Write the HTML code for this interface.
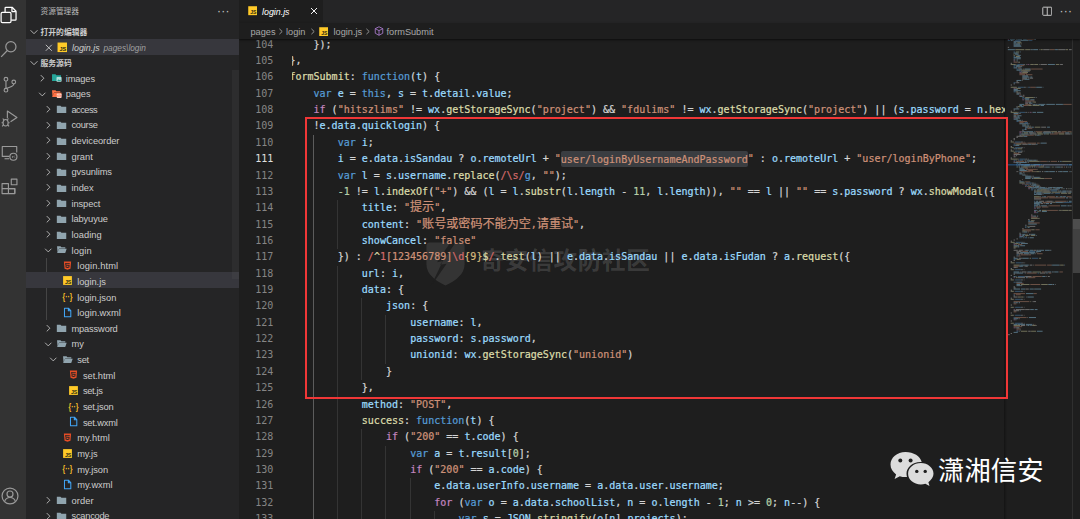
<!DOCTYPE html>
<html lang="zh-CN">
<head>
<meta charset="utf-8">
<title>login.js</title>
<style>
*{box-sizing:border-box;margin:0;padding:0}
html,body{width:1080px;height:519px;overflow:hidden;background:#1e1e1e}
body{position:relative;font-family:"Liberation Sans","Noto Sans CJK SC",sans-serif;color:#ccc;font-size:9.2px}
.abs{position:absolute}
#act{position:absolute;left:0;top:0;width:26px;height:519px;background:#333333}
#act svg{position:absolute;left:1px;width:17px;height:17px}
#side{position:absolute;left:26px;top:0;width:213px;height:519px;background:#252526;overflow:hidden}
#side .title{position:absolute;left:14.5px;top:5.5px;font-size:7.7px;color:#bbbbbb;line-height:11px;letter-spacing:0}
#side .dots{position:absolute;left:191px;top:4.6px;font-size:12px;color:#c5c5c5;letter-spacing:.3px;line-height:12px}
.sec{position:absolute;left:0;width:213px;height:15.6px;font-weight:bold;font-size:7.8px;color:#cccccc;line-height:15.6px}
.sec span{position:absolute;left:14.5px;top:0}
.sec svg{position:absolute;left:2.6px;top:2px;width:10px;height:10px}
.tr{position:absolute;left:0;width:213px;height:15.6px;line-height:15.2px;color:#cccccc;font-size:9.3px}
.tr.selrow{background:#37373d}
.tr span{position:absolute;top:0;height:15.6px}
.tr .chw svg{width:10.5px;height:10.5px;position:absolute;top:3.7px;left:0}
.tr .icw svg{width:11px;height:11px;position:absolute;top:3.0px;left:0}
.tr .tn{white-space:nowrap;top:2.4px}
#sidescroll{position:absolute;left:206px;top:70px;width:7px;height:209px;background:rgba(121,121,121,.10)}
#edit{position:absolute;left:239px;top:0;width:841px;height:519px;background:#1e1e1e;overflow:hidden}
#tabs{position:absolute;left:0;top:0;width:841px;height:23px;background:#252526}
#tab{position:absolute;left:0;top:0;width:84px;height:23px;background:#1e1e1e}
#tab .nm{position:absolute;left:23px;top:.8px;line-height:22px;font-style:italic;color:#ffffff;font-size:8.85px}
#bc{position:absolute;left:0;top:23px;width:841px;height:16px;background:#1e1e1e;color:#a9a9a9;font-size:9.2px;line-height:16px;white-space:nowrap;box-shadow:0 1px 2px rgba(0,0,0,.6);z-index:3}
#bc span{position:absolute;top:1px}
#code{z-index:1;position:absolute;left:53px;top:0;width:712.5px;height:519px;overflow:hidden;font-family:"Liberation Mono",monospace;font-size:10px;}
.cl{-webkit-text-stroke:.22px;position:absolute;white-space:pre;height:16.36px;line-height:16.36px;color:#d4d4d4;font-family:"DejaVu Sans Mono","Liberation Mono","Noto Sans CJK SC",monospace;font-size:10.033px}
.ln{position:absolute;left:0;width:34.4px;text-align:right;height:16.36px;line-height:16.36px;color:#858585;font-family:"DejaVu Sans Mono","Liberation Mono",monospace;font-size:10.033px}
.ln.cur{color:#e0e0e0}
.k{color:#569cd6}.c{color:#c586c0}.s{color:#ce9178}.v{color:#9cdcfe}.f{color:#dcdcaa}.n{color:#b5cea8}.r{color:#d16969}.p{color:#d4d4d4}.q{color:#d7ba7d}
.cj{line-height:0;font-size:12.08px;font-family:"Noto Sans CJK SC",sans-serif}
.sel{background:#3a3d41;padding:2.5px 0;border-radius:2px}
.ig{position:absolute;width:1px;background:#343434}.ig.act{background:#5c5c5c}
#red{position:absolute;left:305px;top:117.2px;width:702.6px;height:281.7px;border:2px solid #f03737;z-index:5}
#mmshadow{position:absolute;left:765px;top:39px;width:3px;height:480px;background:linear-gradient(to right,rgba(0,0,0,.35),rgba(0,0,0,0))}
#vscroll{position:absolute;left:833px;top:39px;width:8px;height:480px;border-left:1px solid #2f2f2f}
#vthumb{position:absolute;left:834px;top:218.500px;width:7px;height:54.500px;background:#414141}
#vthumb2{position:absolute;left:834px;top:218.500px;width:7px;height:10.500px;background:#4d4d4d}
#mmslider{display:none;position:absolute;left:769px;top:110px;width:57px;height:44px;background:rgba(121,121,121,.12)}
.mm{position:absolute;left:0;top:0}
#wm{position:absolute;left:190px;top:244.2px;width:240px;height:44px;z-index:0}
#wm .t{position:absolute;left:51.500px;top:.9px;font-size:23.5px;line-height:28px;font-weight:bold;letter-spacing:.8px;color:rgba(255,255,255,.14);white-space:nowrap;font-family:"Noto Sans CJK SC","Liberation Sans",sans-serif}
#wx{position:absolute;left:888px;top:449.2px;width:160px;height:42px;z-index:6}
#wx .t{color:#f4f4f4;position:absolute;left:50px;top:4.2px;font-size:26.4px;line-height:32px;color:#ffffff;white-space:nowrap;font-family:"Noto Sans CJK SC","Liberation Sans",sans-serif;font-weight:400}
</style>
</head>
<body>
<div id="act">
  <!-- files -->
  <svg style="top:6.4px;left:.3px;width:17.5px;height:17.5px" viewBox="0 0 24 24" fill="none" stroke="#ffffff" stroke-width="1.7" stroke-linejoin="round"><path d="M7 8.2V2.8a1 1 0 0 1 1-1h8.600l5.400 5.400v11.300a1 1 0 0 1-1 1h-5.600"/><path d="M16.400 2v5.600h5.400"/><rect x="1.500" y="8.800" width="13.600" height="14" rx="1.800"/></svg>
  <!-- search -->
  <svg style="top:40.2px;left:.4px;width:18px;height:18px" viewBox="0 0 24 24" fill="none" stroke="#9a9a9a" stroke-width="1.6"><circle cx="14.5" cy="9" r="6.8"/><path d="M9.8 14L1.5 22.5"/></svg>
  <!-- scm -->
  <svg style="top:75.5px" viewBox="0 0 24 24" fill="none" stroke="#9a9a9a" stroke-width="1.6"><circle cx="7" cy="4.5" r="2.6"/><circle cx="7" cy="20" r="2.6"/><circle cx="18" cy="8.5" r="2.6"/><path d="M7 7.2v10.2M18 11.2c0 4-6 4-10.6 6.6"/></svg>
  <!-- debug -->
  <svg style="top:109.5px" viewBox="0 0 24 24" fill="none" stroke="#9a9a9a" stroke-width="1.6" stroke-linejoin="round"><path d="M9 11.5V1.5L22.5 10.5 13.5 16.5"/><ellipse cx="6.5" cy="18" rx="3.6" ry="4.6"/><path d="M4 13.8L2.5 12M9 13.8L10.5 12M2.9 18H.8M12.2 18h-2.1M3.4 21.2L1.6 23M9.6 21.2l1.8 1.8"/></svg>
  <!-- remote -->
  <svg style="top:143.5px" viewBox="0 0 24 24" fill="none" stroke="#9a9a9a" stroke-width="1.6" stroke-linejoin="round"><path d="M12 17.5H1.8V3.5h20.4v8.5"/><path d="M5 20.8h6.5"/><circle cx="17.5" cy="18" r="5"/><path d="M15.6 17l1.4 1.4-1.4 1.4M19.6 16.4l-1.4 1.4 1.4 1.4" stroke-width="1"/></svg>
  <!-- extensions -->
  <svg style="top:177.5px" viewBox="0 0 24 24" fill="none" stroke="#9a9a9a" stroke-width="1.6" stroke-linejoin="round"><path d="M1.5 8h9v14h-9zM1.5 15h18v7h-18M10.5 15v7"/><path d="M10.5 15h9v7"/><rect x="14.5" y="1.5" width="8" height="8"/></svg>
  <!-- account -->
  <svg style="top:486.5px;left:.6px;width:18px;height:18px" viewBox="0 0 24 24" fill="none" stroke="#9a9a9a" stroke-width="1.6"><circle cx="12" cy="12" r="10.6"/><circle cx="12" cy="9.3" r="4"/><path d="M4.8 19.6c1-4 4-5.6 7.2-5.6s6.2 1.6 7.2 5.6"/></svg>
</div>

<div id="side">
  <div class="title">资源管理器</div>
  <div class="dots">···</div>
  <div class="sec" style="top:24.9px"><svg viewBox="0 0 16 16"><path d="M2.5 5.2L8 10.7l5.5-5.5" fill="none" stroke="#c5c5c5" stroke-width="1.4"/></svg><span>打开的编辑器</span></div>
  <div class="tr selrow" style="top:39.2px;height:15.4px">
    <span style="left:17.5px"><svg viewBox="0 0 16 16" style="position:absolute;top:3.9px;left:0;width:9.6px;height:9.6px"><path d="M3 3l10 10M13 3L3 13" stroke="#cccccc" stroke-width="1.5" fill="none"/></svg></span>
    <span style="left:30.7px"><svg viewBox="0 0 16 16" style="position:absolute;top:3.1px;left:0;width:10.6px;height:10.6px"><rect x="0.8" y="0.8" width="14.4" height="14.4" fill="#ffca28"/><text x="14" y="13.6" font-size="8.4" text-anchor="end" fill="#2b2810" font-family="Liberation Sans, sans-serif" font-weight="bold">JS</text></svg></span>
    <span class="tn" style="left:46px;font-style:italic;font-size:8.9px;top:1.9px">login.js</span>
    <span class="tn" style="left:77.5px;font-style:italic;font-size:8.3px;color:#a0a0a0;top:2.1px">pages\login</span>
  </div>
  <div class="sec" style="top:56.0px"><svg viewBox="0 0 16 16"><path d="M2.5 5.2L8 10.7l5.5-5.5" fill="none" stroke="#c5c5c5" stroke-width="1.4"/></svg><span>服务源码</span></div>
  <div style="position:absolute;left:20.3px;top:257.5px;width:1px;height:62.4px;background:#454545"></div>
<div class="tr" style="top:69.18px"><span class="chw" style="left:10.9px"><svg class="ch" viewBox="0 0 16 16"><path d="M5.7 3.2L10.5 8l-4.8 4.8" fill="none" stroke="#c5c5c5" stroke-width="1.3"/></svg></span><span class="icw" style="left:24.5px"><svg class="ic" viewBox="0 0 16 16"><path d="M1.5 3.2h5l1.4 1.6h6.6v8.4h-13z" fill="#26a69a"/><rect x="8" y="7.2" width="7.4" height="7" rx="1" fill="#b2dfdb"/><path d="M9 13l2-2.6 1.3 1.6.9-1 1.3 2z" fill="#26a69a"/></svg></span><span class="tn" style="left:39.8px;letter-spacing:-0.147px">images</span></div>
<div class="tr" style="top:84.82px"><span class="chw" style="left:10.9px"><svg class="ch" viewBox="0 0 16 16"><path d="M3.2 5.7L8 10.5l4.8-4.8" fill="none" stroke="#c5c5c5" stroke-width="1.3"/></svg></span><span class="icw" style="left:24.5px"><svg class="ic" viewBox="0 0 16 16"><path d="M1.5 3.2h5l1.4 1.6h5.6v1.7H4.6L2.2 12z" fill="#ff7043"/><path d="M4.4 6.9h11.2l-2.2 6.3H1.6z" fill="#ff7043"/><rect x="8.4" y="8" width="7" height="6.4" rx="1" fill="#ffccbc"/><text x="11.9" y="13.2" font-size="4.5" text-anchor="middle" fill="#ff7043" font-family="Liberation Sans, sans-serif" font-weight="bold">&lt;/&gt;</text></svg></span><span class="tn" style="left:39.8px;letter-spacing:-0.149px">pages</span></div>
<div class="tr" style="top:100.46px"><span class="chw" style="left:16.6px"><svg class="ch" viewBox="0 0 16 16"><path d="M5.7 3.2L10.5 8l-4.8 4.8" fill="none" stroke="#c5c5c5" stroke-width="1.3"/></svg></span><span class="icw" style="left:30.2px"><svg class="ic" viewBox="0 0 16 16"><path d="M1.200 4h5.300l1.400 1.600h7v9h-13.700z" fill="#90a4ae"/></svg></span><span class="tn" style="left:45.5px;letter-spacing:-0.556px">access</span></div>
<div class="tr" style="top:116.10px"><span class="chw" style="left:16.6px"><svg class="ch" viewBox="0 0 16 16"><path d="M5.7 3.2L10.5 8l-4.8 4.8" fill="none" stroke="#c5c5c5" stroke-width="1.3"/></svg></span><span class="icw" style="left:30.2px"><svg class="ic" viewBox="0 0 16 16"><path d="M1.200 4h5.300l1.400 1.600h7v9h-13.700z" fill="#90a4ae"/></svg></span><span class="tn" style="left:45.5px;letter-spacing:-0.301px">course</span></div>
<div class="tr" style="top:131.74px"><span class="chw" style="left:16.6px"><svg class="ch" viewBox="0 0 16 16"><path d="M5.7 3.2L10.5 8l-4.8 4.8" fill="none" stroke="#c5c5c5" stroke-width="1.3"/></svg></span><span class="icw" style="left:30.2px"><svg class="ic" viewBox="0 0 16 16"><path d="M1.200 4h5.300l1.400 1.600h7v9h-13.700z" fill="#90a4ae"/></svg></span><span class="tn" style="left:45.5px;letter-spacing:-0.062px">deviceorder</span></div>
<div class="tr" style="top:147.38px"><span class="chw" style="left:16.6px"><svg class="ch" viewBox="0 0 16 16"><path d="M5.7 3.2L10.5 8l-4.8 4.8" fill="none" stroke="#c5c5c5" stroke-width="1.3"/></svg></span><span class="icw" style="left:30.2px"><svg class="ic" viewBox="0 0 16 16"><path d="M1.200 4h5.300l1.400 1.600h7v9h-13.700z" fill="#90a4ae"/></svg></span><span class="tn" style="left:45.5px;letter-spacing:0.019px">grant</span></div>
<div class="tr" style="top:163.01px"><span class="chw" style="left:16.6px"><svg class="ch" viewBox="0 0 16 16"><path d="M5.7 3.2L10.5 8l-4.8 4.8" fill="none" stroke="#c5c5c5" stroke-width="1.3"/></svg></span><span class="icw" style="left:30.2px"><svg class="ic" viewBox="0 0 16 16"><path d="M1.200 4h5.300l1.400 1.600h7v9h-13.700z" fill="#90a4ae"/></svg></span><span class="tn" style="left:45.5px;letter-spacing:-0.105px">gvsunlims</span></div>
<div class="tr" style="top:178.65px"><span class="chw" style="left:16.6px"><svg class="ch" viewBox="0 0 16 16"><path d="M5.7 3.2L10.5 8l-4.8 4.8" fill="none" stroke="#c5c5c5" stroke-width="1.3"/></svg></span><span class="icw" style="left:30.2px"><svg class="ic" viewBox="0 0 16 16"><path d="M1.200 4h5.300l1.400 1.600h7v9h-13.700z" fill="#90a4ae"/></svg></span><span class="tn" style="left:45.5px;letter-spacing:-0.027px">index</span></div>
<div class="tr" style="top:194.29px"><span class="chw" style="left:16.6px"><svg class="ch" viewBox="0 0 16 16"><path d="M5.7 3.2L10.5 8l-4.8 4.8" fill="none" stroke="#c5c5c5" stroke-width="1.3"/></svg></span><span class="icw" style="left:30.2px"><svg class="ic" viewBox="0 0 16 16"><path d="M1.200 4h5.300l1.400 1.600h7v9h-13.700z" fill="#90a4ae"/></svg></span><span class="tn" style="left:45.5px;letter-spacing:-0.096px">inspect</span></div>
<div class="tr" style="top:209.93px"><span class="chw" style="left:16.6px"><svg class="ch" viewBox="0 0 16 16"><path d="M5.7 3.2L10.5 8l-4.8 4.8" fill="none" stroke="#c5c5c5" stroke-width="1.3"/></svg></span><span class="icw" style="left:30.2px"><svg class="ic" viewBox="0 0 16 16"><path d="M1.200 4h5.300l1.400 1.600h7v9h-13.700z" fill="#90a4ae"/></svg></span><span class="tn" style="left:45.5px;letter-spacing:-0.115px">labyuyue</span></div>
<div class="tr" style="top:225.57px"><span class="chw" style="left:16.6px"><svg class="ch" viewBox="0 0 16 16"><path d="M5.7 3.2L10.5 8l-4.8 4.8" fill="none" stroke="#c5c5c5" stroke-width="1.3"/></svg></span><span class="icw" style="left:30.2px"><svg class="ic" viewBox="0 0 16 16"><path d="M1.200 4h5.300l1.400 1.600h7v9h-13.700z" fill="#90a4ae"/></svg></span><span class="tn" style="left:45.5px;letter-spacing:0.045px">loading</span></div>
<div class="tr" style="top:241.21px"><span class="chw" style="left:16.6px"><svg class="ch" viewBox="0 0 16 16"><path d="M3.2 5.7L8 10.5l4.8-4.8" fill="none" stroke="#c5c5c5" stroke-width="1.3"/></svg></span><span class="icw" style="left:30.2px"><svg class="ic" viewBox="0 0 16 16"><path d="M1.5 3.2h5l1.4 1.6h5.6v1.7H4.6L2.2 12z" fill="#90a4ae"/><path d="M4.4 6.9h11.2l-2.2 6.3H1.6z" fill="#90a4ae"/></svg></span><span class="tn" style="left:45.5px;letter-spacing:0.129px">login</span></div>
<div class="tr" style="top:256.85px"><span class="icw" style="left:35.9px"><svg class="ic" viewBox="0 0 24 24"><path fill-rule="evenodd" d="M12 17.560l4.070-1.130.550-6.100H9.380L9.200 8.300h7.600l.200-1.990H7l.560 6.010h6.890l-.230 2.580-2.220.600-2.220-.600-.140-1.660h-2l.290 3.190L12 17.560M4.070 3h15.860L18.500 19.200 12 21l-6.500-1.800L4.070 3z" fill="#e44d26"/></svg></span><span class="tn" style="left:51.2px;letter-spacing:0.130px">login.html</span></div>
<div class="tr selrow" style="top:272.49px"><span class="icw" style="left:35.9px"><svg class="ic" viewBox="0 0 16 16"><rect x="1.6" y="1.6" width="12.8" height="12.8" fill="#ffca28"/><text x="13.6" y="13.4" font-size="7.6" text-anchor="end" fill="#2b2810" font-family="Liberation Sans, sans-serif" font-weight="bold">JS</text></svg></span><span class="tn" style="left:51.2px;letter-spacing:-0.044px">login.js</span></div>
<div class="tr" style="top:288.13px"><span class="icw" style="left:35.9px"><svg class="ic" viewBox="0 0 16 16"><text x="8" y="12.6" font-size="13.5" text-anchor="middle" fill="#f9c02a" font-family="Liberation Sans, sans-serif" font-weight="bold" textLength="14.5" lengthAdjust="spacingAndGlyphs">{··}</text></svg></span><span class="tn" style="left:51.2px;letter-spacing:-0.018px">login.json</span></div>
<div class="tr" style="top:303.77px"><span class="icw" style="left:35.9px"><svg class="ic" viewBox="0 0 16 16"><path d="M3.6 1.8h5.8l3.4 3.4v9H3.6z M9.2 2v3.6h3.4" fill="none" stroke="#42a5f5" stroke-width="1.5" stroke-linejoin="round"/></svg></span><span class="tn" style="left:51.2px;letter-spacing:0.019px">login.wxml</span></div>
<div class="tr" style="top:319.40px"><span class="chw" style="left:16.6px"><svg class="ch" viewBox="0 0 16 16"><path d="M5.7 3.2L10.5 8l-4.8 4.8" fill="none" stroke="#c5c5c5" stroke-width="1.3"/></svg></span><span class="icw" style="left:30.2px"><svg class="ic" viewBox="0 0 16 16"><path d="M1.200 4h5.300l1.400 1.600h7v9h-13.700z" fill="#90a4ae"/></svg></span><span class="tn" style="left:45.5px;letter-spacing:-0.161px">mpassword</span></div>
<div class="tr" style="top:335.04px"><span class="chw" style="left:16.6px"><svg class="ch" viewBox="0 0 16 16"><path d="M3.2 5.7L8 10.5l4.8-4.8" fill="none" stroke="#c5c5c5" stroke-width="1.3"/></svg></span><span class="icw" style="left:30.2px"><svg class="ic" viewBox="0 0 16 16"><path d="M1.5 3.2h5l1.4 1.6h5.6v1.7H4.6L2.2 12z" fill="#90a4ae"/><path d="M4.4 6.9h11.2l-2.2 6.3H1.6z" fill="#90a4ae"/></svg></span><span class="tn" style="left:45.5px;letter-spacing:-0.053px">my</span></div>
<div class="tr" style="top:350.68px"><span class="chw" style="left:22.3px"><svg class="ch" viewBox="0 0 16 16"><path d="M3.2 5.7L8 10.5l4.8-4.8" fill="none" stroke="#c5c5c5" stroke-width="1.3"/></svg></span><span class="icw" style="left:35.9px"><svg class="ic" viewBox="0 0 16 16"><path d="M1.5 3.2h5l1.4 1.6h5.6v1.7H4.6L2.2 12z" fill="#90a4ae"/><path d="M4.4 6.9h11.2l-2.2 6.3H1.6z" fill="#90a4ae"/></svg></span><span class="tn" style="left:51.2px;letter-spacing:-0.202px">set</span></div>
<div class="tr" style="top:366.32px"><span class="icw" style="left:41.6px"><svg class="ic" viewBox="0 0 24 24"><path fill-rule="evenodd" d="M12 17.560l4.070-1.130.550-6.100H9.380L9.200 8.300h7.600l.200-1.990H7l.560 6.010h6.890l-.230 2.580-2.220.600-2.220-.600-.140-1.660h-2l.290 3.190L12 17.560M4.070 3h15.860L18.500 19.200 12 21l-6.500-1.800L4.070 3z" fill="#e44d26"/></svg></span><span class="tn" style="left:56.9px;letter-spacing:-0.033px">set.html</span></div>
<div class="tr" style="top:381.96px"><span class="icw" style="left:41.6px"><svg class="ic" viewBox="0 0 16 16"><rect x="1.6" y="1.6" width="12.8" height="12.8" fill="#ffca28"/><text x="13.6" y="13.4" font-size="7.6" text-anchor="end" fill="#2b2810" font-family="Liberation Sans, sans-serif" font-weight="bold">JS</text></svg></span><span class="tn" style="left:56.9px;letter-spacing:-0.317px">set.js</span></div>
<div class="tr" style="top:397.60px"><span class="icw" style="left:41.6px"><svg class="ic" viewBox="0 0 16 16"><text x="8" y="12.6" font-size="13.5" text-anchor="middle" fill="#f9c02a" font-family="Liberation Sans, sans-serif" font-weight="bold" textLength="14.5" lengthAdjust="spacingAndGlyphs">{··}</text></svg></span><span class="tn" style="left:56.9px;letter-spacing:-0.193px">set.json</span></div>
<div class="tr" style="top:413.24px"><span class="icw" style="left:41.6px"><svg class="ic" viewBox="0 0 16 16"><path d="M3.6 1.8h5.8l3.4 3.4v9H3.6z M9.2 2v3.6h3.4" fill="none" stroke="#42a5f5" stroke-width="1.5" stroke-linejoin="round"/></svg></span><span class="tn" style="left:56.9px;letter-spacing:-0.171px">set.wxml</span></div>
<div class="tr" style="top:428.88px"><span class="icw" style="left:35.9px"><svg class="ic" viewBox="0 0 24 24"><path fill-rule="evenodd" d="M12 17.560l4.070-1.130.550-6.100H9.380L9.200 8.300h7.600l.200-1.990H7l.560 6.010h6.890l-.230 2.580-2.220.600-2.220-.600-.140-1.660h-2l.290 3.190L12 17.560M4.070 3h15.860L18.500 19.200 12 21l-6.500-1.800L4.070 3z" fill="#e44d26"/></svg></span><span class="tn" style="left:51.2px;letter-spacing:0.134px">my.html</span></div>
<div class="tr" style="top:444.52px"><span class="icw" style="left:35.9px"><svg class="ic" viewBox="0 0 16 16"><rect x="1.6" y="1.6" width="12.8" height="12.8" fill="#ffca28"/><text x="13.6" y="13.4" font-size="7.6" text-anchor="end" fill="#2b2810" font-family="Liberation Sans, sans-serif" font-weight="bold">JS</text></svg></span><span class="tn" style="left:51.2px;letter-spacing:-0.140px">my.js</span></div>
<div class="tr" style="top:460.16px"><span class="icw" style="left:35.9px"><svg class="ic" viewBox="0 0 16 16"><text x="8" y="12.6" font-size="13.5" text-anchor="middle" fill="#f9c02a" font-family="Liberation Sans, sans-serif" font-weight="bold" textLength="14.5" lengthAdjust="spacingAndGlyphs">{··}</text></svg></span><span class="tn" style="left:51.2px;letter-spacing:-0.078px">my.json</span></div>
<div class="tr" style="top:475.79px"><span class="icw" style="left:35.9px"><svg class="ic" viewBox="0 0 16 16"><path d="M3.6 1.8h5.8l3.4 3.4v9H3.6z M9.2 2v3.6h3.4" fill="none" stroke="#42a5f5" stroke-width="1.5" stroke-linejoin="round"/></svg></span><span class="tn" style="left:51.2px;letter-spacing:-0.024px">my.wxml</span></div>
<div class="tr" style="top:491.43px"><span class="chw" style="left:16.6px"><svg class="ch" viewBox="0 0 16 16"><path d="M5.7 3.2L10.5 8l-4.8 4.8" fill="none" stroke="#c5c5c5" stroke-width="1.3"/></svg></span><span class="icw" style="left:30.2px"><svg class="ic" viewBox="0 0 16 16"><path d="M1.200 4h5.300l1.400 1.600h7v9h-13.700z" fill="#90a4ae"/></svg></span><span class="tn" style="left:45.5px;letter-spacing:0.076px">order</span></div>
<div class="tr" style="top:507.07px"><span class="chw" style="left:16.6px"><svg class="ch" viewBox="0 0 16 16"><path d="M5.7 3.2L10.5 8l-4.8 4.8" fill="none" stroke="#c5c5c5" stroke-width="1.3"/></svg></span><span class="icw" style="left:30.2px"><svg class="ic" viewBox="0 0 16 16"><path d="M1.200 4h5.300l1.400 1.600h7v9h-13.700z" fill="#90a4ae"/></svg></span><span class="tn" style="left:45.5px;letter-spacing:-0.252px">scancode</span></div>
  <div id="sidescroll"></div>
</div>

<div id="edit">
  <div id="tabs">
    <div id="tab">
      <svg viewBox="0 0 16 16" style="position:absolute;left:8.8px;top:6.3px;width:9.4px;height:9.4px"><rect x="0.4" y="0.4" width="15.2" height="15.2" fill="#ffca28"/><text x="14.4" y="14" font-size="8.6" text-anchor="end" fill="#2b2810" font-family="Liberation Sans, sans-serif" font-weight="bold">JS</text></svg>
      <span class="nm">login.js</span>
      <svg viewBox="0 0 16 16" style="position:absolute;left:70.5px;top:7px;width:8px;height:8px"><path d="M2 2l12 12M14 2L2 14" stroke="#ffffff" stroke-width="1.9" fill="none"/></svg>
    </div>
    <!-- split + more -->
    <svg viewBox="0 0 16 16" style="position:absolute;left:802.5px;top:6px;width:10.5px;height:10.5px"><rect x="1.2" y="1.8" width="13.6" height="12.4" rx="1" fill="none" stroke="#c5c5c5" stroke-width="1.5"/><path d="M8 2v12" stroke="#c5c5c5" stroke-width="1.5"/></svg>
    <div style="position:absolute;left:820.5px;top:4.8px;font-size:12px;line-height:12px;color:#c5c5c5;letter-spacing:.3px">···</div>
  </div>
  <div id="bc">
    <span style="left:11.5px">pages</span>
    <svg viewBox="0 0 8 10" style="position:absolute;left:38.8px;top:4.6px;width:5.6px;height:7px" fill="none" stroke="#a9a9a9" stroke-width="1.2"><path d="M2 1.2L6 5 2 8.800"/></svg>
    <span style="left:47px">login</span>
    <svg viewBox="0 0 8 10" style="position:absolute;left:71.3px;top:4.6px;width:5.6px;height:7px" fill="none" stroke="#a9a9a9" stroke-width="1.2"><path d="M2 1.2L6 5 2 8.800"/></svg>
    <svg viewBox="0 0 16 16" style="position:absolute;left:80px;top:3.6px;width:9.4px;height:9.4px"><rect x="0.4" y="0.4" width="15.2" height="15.2" fill="#ffca28"/><text x="14.4" y="14" font-size="8.6" text-anchor="end" fill="#2b2810" font-family="Liberation Sans, sans-serif" font-weight="bold">JS</text></svg>
    <span style="left:94.5px">login.js</span>
    <svg viewBox="0 0 8 10" style="position:absolute;left:126.3px;top:4.6px;width:5.6px;height:7px" fill="none" stroke="#a9a9a9" stroke-width="1.2"><path d="M2 1.2L6 5 2 8.800"/></svg>
    <svg viewBox="0 0 16 16" style="position:absolute;left:135px;top:3.2px;width:10px;height:10px" fill="none" stroke="#b180d7" stroke-width="1.3" stroke-linejoin="round"><path d="M8 1.2l6 3v7.4l-6 3.2-6-3.2V4.2z"/><path d="M2 4.2l6 3.2 6-3.2M8 7.4v7.4"/></svg>
    <span style="left:147.5px">formSubmit</span>
  </div>
<div id="wm">
  <svg viewBox="0 0 40 43" style="position:absolute;left:-5.200px;top:-3.600px;width:43px;height:45.500px"><path d="M2 4.500C2 2.800 3.200 1.500 5 1.500H35C36.800 1.500 38 2.800 38 4.500V22C38 31 30 37.500 20 42 10 37.500 2 31 2 22Z" fill="#ffffff" fill-opacity=".1"/><path d="M30.500 0L15 22.500 21 21.500 5.500 44 17.500 19 12 20 25.500 0Z" fill="#1e1e1e" fill-opacity=".92"/></svg>
  <div class="t">奇安信攻防社区</div>
</div>
  <div id="lns" style="position:absolute;left:0;top:0;width:50px;height:519px">
<div class="ln" style="top:36.62px">104</div>
<div class="ln" style="top:52.98px">105</div>
<div class="ln" style="top:69.34px">106</div>
<div class="ln" style="top:85.70px">107</div>
<div class="ln" style="top:102.06px">108</div>
<div class="ln" style="top:118.42px">109</div>
<div class="ln" style="top:134.78px">110</div>
<div class="ln cur" style="top:151.14px">111</div>
<div class="ln" style="top:167.50px">112</div>
<div class="ln" style="top:183.86px">113</div>
<div class="ln" style="top:200.22px">114</div>
<div class="ln" style="top:216.58px">115</div>
<div class="ln" style="top:232.94px">116</div>
<div class="ln" style="top:249.30px">117</div>
<div class="ln" style="top:265.66px">118</div>
<div class="ln" style="top:282.02px">119</div>
<div class="ln" style="top:298.38px">120</div>
<div class="ln" style="top:314.74px">121</div>
<div class="ln" style="top:331.10px">122</div>
<div class="ln" style="top:347.46px">123</div>
<div class="ln" style="top:363.82px">124</div>
<div class="ln" style="top:380.18px">125</div>
<div class="ln" style="top:396.54px">126</div>
<div class="ln" style="top:412.90px">127</div>
<div class="ln" style="top:429.26px">128</div>
<div class="ln" style="top:445.62px">129</div>
<div class="ln" style="top:461.98px">130</div>
<div class="ln" style="top:478.34px">131</div>
<div class="ln" style="top:494.70px">132</div>
<div class="ln" style="top:511.06px">133</div>
  </div>
  <div id="code">
<div class="ig act" style="left:20.9px;top:134.78px;height:392.64px"></div>
<div class="ig" style="left:45.1px;top:200.22px;height:49.08px"></div>
<div class="ig" style="left:45.1px;top:265.66px;height:261.76px"></div>
<div class="ig" style="left:69.2px;top:298.38px;height:81.80px"></div>
<div class="ig" style="left:93.4px;top:314.74px;height:49.08px"></div>
<div class="ig" style="left:69.2px;top:429.26px;height:98.16px"></div>
<div class="ig" style="left:93.4px;top:445.62px;height:81.80px"></div>
<div class="ig" style="left:117.6px;top:478.34px;height:49.08px"></div>
<div class="ig" style="left:141.7px;top:511.06px;height:16.36px"></div>
<div class="cl" style="top:36.62px;left:21.5px"><span class="p">});</span></div>
<div class="cl" style="top:52.98px;left:-2.6px"><span class="p">},</span></div>
<div class="cl" style="top:69.34px;left:-2.6px"><span class="f">formSubmit</span><span class="p">: </span><span class="k">function</span><span class="p">(</span><span class="v">t</span><span class="p">) {</span></div>
<div class="cl" style="top:85.70px;left:21.5px"><span class="k">var</span><span class="p"> </span><span class="v">e</span><span class="p"> = </span><span class="k">this</span><span class="p">, </span><span class="v">s</span><span class="p"> = </span><span class="v">t</span><span class="p">.</span><span class="v">detail</span><span class="p">.</span><span class="v">value</span><span class="p">;</span></div>
<div class="cl" style="top:102.06px;left:21.5px"><span class="c">if</span><span class="p"> (</span><span class="s">"hitszlims"</span><span class="p"> != </span><span class="v">wx</span><span class="p">.</span><span class="f">getStorageSync</span><span class="p">(</span><span class="s">"project"</span><span class="p">) &amp;&amp; </span><span class="s">"fdulims"</span><span class="p"> != </span><span class="v">wx</span><span class="p">.</span><span class="f">getStorageSync</span><span class="p">(</span><span class="s">"project"</span><span class="p">) || (</span><span class="v">s</span><span class="p">.</span><span class="v">password</span><span class="p"> = </span><span class="v">n</span><span class="p">.</span><span class="f">hexMD5</span><span class="p">(</span><span class="v">s</span><span class="p">.</span><span class="v">password</span><span class="p">)),</span></div>
<div class="cl" style="top:118.42px;left:21.5px"><span class="p">!</span><span class="v">e</span><span class="p">.</span><span class="v">data</span><span class="p">.</span><span class="v">quicklogin</span><span class="p">) {</span></div>
<div class="cl" style="top:134.78px;left:45.7px"><span class="k">var</span><span class="p"> </span><span class="v">i</span><span class="p">;</span></div>
<div class="cl" style="top:151.14px;left:45.7px"><span class="v">i</span><span class="p"> = </span><span class="v">e</span><span class="p">.</span><span class="v">data</span><span class="p">.</span><span class="v">isSandau</span><span class="p"> ? </span><span class="v">o</span><span class="p">.</span><span class="v">remoteUrl</span><span class="p"> + </span><span class="s">"</span><span class="s sel">user/loginByUsernameAndPassword</span><span class="s">"</span><span class="p"> : </span><span class="v">o</span><span class="p">.</span><span class="v">remoteUrl</span><span class="p"> + </span><span class="s">"user/loginByPhone"</span><span class="p">;</span></div>
<div class="cl" style="top:167.50px;left:45.7px"><span class="k">var</span><span class="p"> </span><span class="v">l</span><span class="p"> = </span><span class="v">s</span><span class="p">.</span><span class="v">username</span><span class="p">.</span><span class="f">replace</span><span class="p">(</span><span class="r">/\s/</span><span class="k">g</span><span class="p">, </span><span class="s">""</span><span class="p">);</span></div>
<div class="cl" style="top:183.86px;left:45.7px"><span class="n">-1</span><span class="p"> != </span><span class="v">l</span><span class="p">.</span><span class="f">indexOf</span><span class="p">(</span><span class="s">"+"</span><span class="p">) &amp;&amp; (</span><span class="v">l</span><span class="p"> = </span><span class="v">l</span><span class="p">.</span><span class="f">substr</span><span class="p">(</span><span class="v">l</span><span class="p">.</span><span class="v">length</span><span class="p"> - </span><span class="n">11</span><span class="p">, </span><span class="v">l</span><span class="p">.</span><span class="v">length</span><span class="p">)), </span><span class="s">""</span><span class="p"> == </span><span class="v">l</span><span class="p"> || </span><span class="s">""</span><span class="p"> == </span><span class="v">s</span><span class="p">.</span><span class="v">password</span><span class="p"> ? </span><span class="v">wx</span><span class="p">.</span><span class="f">showModal</span><span class="p">({</span></div>
<div class="cl" style="top:200.22px;left:69.8px"><span class="v">title</span><span class="p">: </span><span class="s">"<span class="cj">提示</span>"</span><span class="p">,</span></div>
<div class="cl" style="top:216.58px;left:69.8px"><span class="v">content</span><span class="p">: </span><span class="s">"<span class="cj">账号或密码不能为空</span>,<span class="cj">请重试</span>"</span><span class="p">,</span></div>
<div class="cl" style="top:232.94px;left:69.8px"><span class="v">showCancel</span><span class="p">: </span><span class="s">"false"</span></div>
<div class="cl" style="top:249.30px;left:45.7px"><span class="p">}) : </span><span class="r">/</span><span class="f">^</span><span class="r">1</span><span class="s">[123456789]</span><span class="r">\d</span><span class="q">{9}</span><span class="f">$</span><span class="r">/</span><span class="p">.</span><span class="f">test</span><span class="p">(</span><span class="v">l</span><span class="p">) || </span><span class="v">e</span><span class="p">.</span><span class="v">data</span><span class="p">.</span><span class="v">isSandau</span><span class="p"> || </span><span class="v">e</span><span class="p">.</span><span class="v">data</span><span class="p">.</span><span class="v">isFudan</span><span class="p"> ? </span><span class="v">a</span><span class="p">.</span><span class="f">request</span><span class="p">({</span></div>
<div class="cl" style="top:265.66px;left:69.8px"><span class="v">url</span><span class="p">: </span><span class="v">i</span><span class="p">,</span></div>
<div class="cl" style="top:282.02px;left:69.8px"><span class="v">data</span><span class="p">: {</span></div>
<div class="cl" style="top:298.38px;left:94.0px"><span class="v">json</span><span class="p">: {</span></div>
<div class="cl" style="top:314.74px;left:118.2px"><span class="v">username</span><span class="p">: </span><span class="v">l</span><span class="p">,</span></div>
<div class="cl" style="top:331.10px;left:118.2px"><span class="v">password</span><span class="p">: </span><span class="v">s</span><span class="p">.</span><span class="v">password</span><span class="p">,</span></div>
<div class="cl" style="top:347.46px;left:118.2px"><span class="v">unionid</span><span class="p">: </span><span class="v">wx</span><span class="p">.</span><span class="f">getStorageSync</span><span class="p">(</span><span class="s">"unionid"</span><span class="p">)</span></div>
<div class="cl" style="top:363.82px;left:94.0px"><span class="p">}</span></div>
<div class="cl" style="top:380.18px;left:69.8px"><span class="p">},</span></div>
<div class="cl" style="top:396.54px;left:69.8px"><span class="v">method</span><span class="p">: </span><span class="s">"POST"</span><span class="p">,</span></div>
<div class="cl" style="top:412.90px;left:69.8px"><span class="f">success</span><span class="p">: </span><span class="k">function</span><span class="p">(</span><span class="v">t</span><span class="p">) {</span></div>
<div class="cl" style="top:429.26px;left:94.0px"><span class="c">if</span><span class="p"> (</span><span class="s">"200"</span><span class="p"> == </span><span class="v">t</span><span class="p">.</span><span class="v">code</span><span class="p">) {</span></div>
<div class="cl" style="top:445.62px;left:118.2px"><span class="k">var</span><span class="p"> </span><span class="v">a</span><span class="p"> = </span><span class="v">t</span><span class="p">.</span><span class="v">result</span><span class="p">[</span><span class="n">0</span><span class="p">];</span></div>
<div class="cl" style="top:461.98px;left:118.2px"><span class="c">if</span><span class="p"> (</span><span class="s">"200"</span><span class="p"> == </span><span class="v">a</span><span class="p">.</span><span class="v">code</span><span class="p">) {</span></div>
<div class="cl" style="top:478.34px;left:142.3px"><span class="v">e</span><span class="p">.</span><span class="v">data</span><span class="p">.</span><span class="v">userInfo</span><span class="p">.</span><span class="v">username</span><span class="p"> = </span><span class="v">a</span><span class="p">.</span><span class="v">data</span><span class="p">.</span><span class="v">user</span><span class="p">.</span><span class="v">username</span><span class="p">;</span></div>
<div class="cl" style="top:494.70px;left:142.3px"><span class="c">for</span><span class="p"> (</span><span class="k">var</span><span class="p"> </span><span class="v">o</span><span class="p"> = </span><span class="v">a</span><span class="p">.</span><span class="v">data</span><span class="p">.</span><span class="v">schoolList</span><span class="p">, </span><span class="v">n</span><span class="p"> = </span><span class="v">o</span><span class="p">.</span><span class="v">length</span><span class="p"> - </span><span class="n">1</span><span class="p">; </span><span class="v">n</span><span class="p"> &gt;= </span><span class="n">0</span><span class="p">; </span><span class="v">n</span><span class="p">--) {</span></div>
<div class="cl" style="top:511.06px;left:166.5px"><span class="k">var</span><span class="p"> </span><span class="v">s</span><span class="p"> = </span><span class="v">JSON</span><span class="p">.</span><span class="f">stringify</span><span class="p">(</span><span class="v">o</span><span class="p">[</span><span class="v">n</span><span class="p">].</span><span class="v">projects</span><span class="p">);</span></div>
  </div>
  <div id="mmshadow"></div>
  <div id="mmslider"></div>
  <div id="vscroll"></div>
  <div id="vthumb"></div>
  <div id="vthumb2"></div>
</div>
<svg class="mm" width="1080" height="519" viewBox="0 0 1080 519" fill="none" stroke-width="1.0" stroke-opacity=".43"><rect x="1007.8" y="164.20" width="64.2" height="1.2" fill="#264f78" stroke="none"/><path d="M1007.8 39.40h1.3M1013.6 61.06h1.3M1027.4 64.48h2.0M1019.4 72.46h2.0M1013.6 88.42h2.0M1019.4 95.26h1.3M1022.3 99.82h2.0M1025.2 102.10h2.0M1029.6 112.36h2.0M1013.6 118.06h1.3M1019.4 131.74h2.0M1019.4 132.88h2.0M1013.6 155.68h1.3M1013.6 161.38h1.3M1022.3 184.18h1.3M1025.2 186.46h1.3M1028.2 188.74h2.0M1034.0 208.12h2.0M1034.0 211.54h2.0M1034.0 212.68h2.0M1031.1 216.10h1.3M1019.4 235.48h2.0M1013.6 244.60h2.0M1013.6 277.66h1.3M1013.6 309.58h1.3M1013.6 319.84h2.0M1013.6 327.82h2.0M1016.5 330.10h1.3" stroke="#c586c0"/><path d="M1010.0 39.40h4.9M1015.8 39.40h0.6M1017.3 39.40h4.9M1023.1 39.40h3.5M1034.7 39.40h1.3M1010.7 40.54h2.0M1020.9 40.54h7.1M1013.6 41.68h7.1M1013.6 42.82h2.8M1013.6 43.96h1.3M1015.8 43.96h4.2M1013.6 45.10h7.1M1013.6 46.24h7.8M1007.8 49.66h7.1M1031.1 49.66h1.3M1033.2 49.66h4.9M1055.1 49.66h2.8M1020.2 51.94h0.6M1013.6 53.08h4.2M1015.1 54.22h3.5M1017.3 55.36h3.5M1013.6 57.64h7.1M1016.5 58.78h4.2M1017.3 59.92h0.6M1017.3 61.06h0.6M1023.8 64.48h0.6M1047.8 64.48h7.1M1016.5 65.62h2.8M1015.8 66.76h6.4M1013.6 67.90h3.5M1019.4 69.04h2.8M1024.5 69.04h5.7M1016.5 70.18h4.2M1021.6 71.32h0.6M1028.2 71.32h0.6M1022.3 75.88h5.7M1022.3 77.02h7.1M1030.3 77.02h2.0M1024.5 79.30h4.9M1016.5 80.44h4.9M1024.5 87.28h0.6M1036.2 87.28h5.7M1042.7 87.28h0.6M1013.6 89.56h4.2M1013.6 90.70h7.1M1016.5 94.12h2.8M1019.4 96.40h2.8M1034.7 97.54h0.6M1024.5 98.68h4.9M1025.2 99.82h4.2M1030.3 99.82h4.2M1031.8 102.10h0.6M1028.9 103.24h3.5M1019.4 104.38h4.9M1033.2 104.38h2.0M1036.2 104.38h1.3M1038.3 104.38h7.1M1046.3 104.38h8.6M1055.8 104.38h7.1M1019.4 105.52h2.8M1040.5 105.52h3.5M1016.5 106.66h0.6M1020.9 106.66h2.8M1013.6 108.94h5.7M1026.0 112.36h0.6M1032.5 112.36h3.5M1036.9 112.36h6.4M1013.6 113.50h4.9M1013.6 115.78h2.8M1017.3 115.78h4.2M1017.3 116.92h2.0M1015.8 118.06h4.2M1013.6 119.20h4.2M1016.5 120.34h4.9M1022.3 120.34h0.6M1019.4 123.76h8.6M1028.9 123.76h0.6M1022.3 124.90h1.3M1022.3 126.04h4.2M1025.2 127.18h2.8M1028.9 127.18h2.0M1031.8 127.18h2.0M1047.1 127.18h2.8M1025.2 128.32h1.3M1024.5 129.46h2.0M1022.3 131.74h3.5M1026.7 131.74h6.4M1034.0 131.74h0.6M1035.4 132.88h0.6M1042.7 132.88h8.6M1052.1 132.88h1.3M1065.2 132.88h4.2M1021.6 134.02h7.1M1029.6 134.02h2.8M1044.1 134.02h1.3M1071.0 134.02h0.6M1036.9 135.16h2.8M1040.5 135.16h0.6M1023.8 136.30h3.5M1021.6 142.00h0.6M1040.5 143.14h5.7M1028.2 144.28h2.8M1036.2 144.28h1.3M1015.8 145.42h3.5M1021.6 147.70h0.6M1013.6 148.84h1.3M1015.8 148.84h1.3M1021.6 151.12h0.6M1026.0 159.10h0.6M1016.5 160.24h0.6M1023.8 160.24h0.6M1026.7 160.24h0.6M1028.2 160.24h4.2M1033.2 160.24h3.5M1027.4 161.38h1.3M1060.1 161.38h1.3M1014.3 162.52h0.6M1015.8 162.52h2.8M1019.4 162.52h7.1M1019.4 163.66h0.6M1016.5 164.80h0.6M1019.4 164.80h0.6M1020.9 164.80h2.8M1024.5 164.80h5.7M1032.5 164.80h0.6M1034.0 164.80h6.4M1068.9 164.80h0.6M1070.3 164.80h1.3M1019.4 165.94h0.6M1022.3 165.94h0.6M1023.8 165.94h5.7M1020.9 167.08h0.6M1034.7 167.08h0.6M1037.6 167.08h0.6M1044.1 167.08h0.6M1045.6 167.08h4.2M1055.1 167.08h0.6M1056.5 167.08h4.2M1068.1 167.08h0.6M1019.4 168.22h3.5M1019.4 169.36h4.9M1019.4 170.50h7.1M1039.8 171.64h0.6M1044.1 171.64h0.6M1045.6 171.64h2.8M1049.2 171.64h5.7M1058.0 171.64h0.6M1059.4 171.64h2.8M1063.1 171.64h4.9M1070.3 171.64h0.6M1019.4 172.78h2.0M1023.1 172.78h0.6M1019.4 173.92h2.8M1022.3 175.06h2.8M1025.2 176.20h5.7M1032.5 176.20h0.6M1025.2 177.34h5.7M1032.5 177.34h0.6M1034.0 177.34h5.7M1025.2 178.48h4.9M1031.8 178.48h1.3M1019.4 181.90h4.2M1032.5 183.04h0.6M1031.8 184.18h0.6M1033.2 184.18h2.8M1028.2 185.32h0.6M1031.1 185.32h0.6M1032.5 185.32h4.2M1034.7 186.46h0.6M1036.2 186.46h2.8M1028.2 187.60h0.6M1029.6 187.60h2.8M1033.2 187.60h5.7M1039.8 187.60h5.7M1047.8 187.60h0.6M1049.2 187.60h2.8M1052.9 187.60h2.8M1056.5 187.60h5.7M1034.7 188.74h0.6M1037.6 188.74h0.6M1039.1 188.74h2.8M1042.7 188.74h7.1M1051.4 188.74h0.6M1054.3 188.74h0.6M1055.8 188.74h4.2M1064.5 188.74h0.6M1070.3 188.74h0.6M1034.0 189.88h0.6M1036.9 189.88h2.8M1047.8 189.88h0.6M1049.2 189.88h0.6M1051.4 189.88h5.7M1059.4 191.02h2.0M1062.3 191.02h4.2M1067.4 191.02h1.3M1034.0 192.16h2.0M1036.9 192.16h4.9M1061.6 192.16h4.9M1069.6 192.16h2.0M1036.2 193.30h4.9M1042.0 193.30h0.6M1043.4 193.30h7.1M1051.4 193.30h1.3M1034.0 194.44h2.8M1037.6 194.44h4.2M1040.5 196.72h0.6M1042.0 196.72h0.6M1043.4 196.72h2.8M1055.8 196.72h2.0M1060.1 196.72h2.0M1063.1 196.72h2.8M1034.0 197.86h0.6M1066.0 197.86h2.0M1036.2 201.28h2.0M1044.9 201.28h0.6M1053.6 201.28h0.6M1068.9 201.28h2.8M1034.0 202.42h0.6M1035.4 202.42h6.4M1055.8 202.42h7.1M1034.0 203.56h5.7M1045.6 203.56h3.5M1050.0 203.56h2.0M1036.9 204.70h2.8M1034.0 205.84h4.2M1039.1 205.84h1.3M1041.2 205.84h5.7M1060.9 205.84h5.7M1067.4 205.84h2.0M1036.9 208.12h1.3M1039.1 208.12h0.6M1034.0 210.40h2.8M1039.1 210.40h2.0M1042.0 211.54h4.9M1033.2 216.10h2.8M1036.9 216.10h1.3M1028.2 221.80h5.7M1028.2 224.08h8.6M1025.2 227.50h0.6M1026.7 227.50h0.6M1028.2 227.50h1.3M1022.3 232.06h0.6M1023.8 232.06h3.5M1019.4 234.34h2.0M1022.3 234.34h2.8M1028.9 234.34h1.3M1031.1 234.34h4.2M1022.3 235.48h2.0M1036.2 235.48h0.6M1019.4 236.62h4.2M1026.0 236.62h0.6M1021.6 237.76h0.6M1029.6 237.76h4.2M1022.3 242.32h0.6M1013.6 243.46h0.6M1019.4 243.46h0.6M1020.9 243.46h6.4M1013.6 245.74h5.7M1020.2 245.74h4.9M1018.0 246.88h1.3M1025.2 250.30h3.5M1029.6 250.30h3.5M1036.9 250.30h1.3M1039.1 250.30h4.9M1044.9 250.30h4.9M1050.7 250.30h0.6M1036.2 251.44h4.9M1020.2 252.58h8.6M1029.6 252.58h5.7M1023.8 253.72h5.7M1030.3 253.72h4.2M1013.6 258.28h4.2M1022.3 258.28h6.4M1020.2 259.42h0.6M1022.3 262.84h0.6M1020.2 265.12h8.6M1052.1 265.12h7.1M1019.4 266.26h3.5M1021.6 269.68h0.6M1013.6 271.96h5.7M1027.4 271.96h4.2M1047.8 271.96h3.5M1052.1 271.96h1.3M1054.3 271.96h4.2M1013.6 273.10h2.0M1016.5 273.10h6.4M1046.3 273.10h1.3M1013.6 276.52h2.0M1016.5 276.52h0.6M1042.7 276.52h2.8M1026.0 277.66h1.3M1021.6 279.94h0.6M1016.5 282.22h5.7M1016.5 284.50h3.5M1048.5 284.50h3.5M1052.9 284.50h1.3M1016.5 285.64h4.2M1021.6 285.64h0.6M1013.6 289.06h6.4M1020.9 289.06h4.2M1029.6 289.06h4.2M1034.7 289.06h6.4M1021.6 291.34h0.6M1026.0 293.62h7.1M1027.4 297.04h6.4M1021.6 299.32h0.6M1013.6 302.74h1.3M1015.8 302.74h2.0M1018.7 302.74h1.3M1021.6 307.30h0.6M1030.3 309.58h3.5M1034.7 309.58h2.8M1020.2 310.72h0.6M1021.6 315.28h0.6M1028.9 317.56h7.1M1013.6 318.70h4.9M1021.6 323.26h0.6M1013.6 324.40h3.5M1018.0 324.40h7.1M1026.0 324.40h6.4M1027.4 325.54h2.0M1030.3 325.54h1.3M1016.5 327.82h2.8M1020.2 330.10h0.6M1036.9 331.24h5.7M1013.6 332.38h4.2" stroke="#9cdcfe"/><path d="M1016.5 39.40h0.6M1026.7 39.40h0.6M1034.0 39.40h0.6M1013.6 40.54h0.6M1020.2 40.54h0.6M1028.2 40.54h0.6M1015.1 43.96h0.6M1020.9 43.96h0.6M1007.8 47.38h1.3M1015.1 49.66h0.6M1030.3 49.66h0.6M1032.5 49.66h0.6M1039.1 49.66h0.6M1042.7 49.66h0.6M1043.4 49.66h5.7M1049.2 49.66h0.6M1054.3 49.66h0.6M1058.0 49.66h0.6M1058.7 49.66h6.4M1065.2 49.66h0.6M1068.9 49.66h2.8M1018.0 53.08h0.6M1019.4 56.50h0.6M1013.6 59.92h1.3M1015.8 59.92h0.6M1015.8 61.06h0.6M1018.0 62.20h0.6M1010.7 63.34h1.3M1015.8 64.48h0.6M1023.1 64.48h0.6M1024.5 64.48h0.6M1026.0 64.48h0.6M1034.0 64.48h0.6M1039.1 64.48h0.6M1040.5 64.48h6.4M1060.1 64.48h2.8M1015.8 65.62h0.6M1019.4 65.62h0.6M1018.7 69.04h0.6M1023.1 69.04h0.6M1030.3 69.04h0.6M1020.9 70.18h0.6M1030.3 70.18h0.6M1020.9 71.32h0.6M1022.3 71.32h0.6M1023.1 71.32h4.2M1027.4 71.32h0.6M1028.9 71.32h0.6M1021.6 72.46h0.6M1022.3 78.16h4.9M1028.2 78.16h0.6M1029.6 78.16h3.5M1022.3 79.30h1.3M1023.8 79.30h0.6M1022.3 80.44h0.6M1016.5 81.58h1.3M1015.8 82.72h0.6M1016.5 82.72h2.8M1013.6 83.86h1.3M1010.7 85.00h1.3M1016.5 87.28h0.6M1023.8 87.28h0.6M1025.2 87.28h0.6M1026.7 87.28h0.6M1029.6 87.28h0.6M1035.4 87.28h0.6M1015.8 88.42h0.6M1015.8 91.84h0.6M1016.5 92.98h4.2M1021.6 95.26h0.6M1023.1 95.26h1.3M1022.3 96.40h0.6M1034.0 97.54h0.6M1036.2 97.54h0.6M1027.4 102.10h0.6M1028.2 102.10h2.8M1025.2 103.24h2.8M1031.8 104.38h0.6M1035.4 104.38h0.6M1063.1 104.38h0.6M1027.4 105.52h0.6M1017.3 106.66h0.6M1020.2 106.66h0.6M1016.5 107.80h1.3M1013.6 110.08h1.3M1010.7 111.22h1.3M1018.0 112.36h0.6M1025.2 112.36h0.6M1026.7 112.36h0.6M1028.2 112.36h0.6M1019.4 113.50h0.6M1020.2 113.50h0.6M1013.6 116.92h2.8M1016.5 116.92h0.6M1015.1 118.06h0.6M1018.7 121.48h0.6M1028.2 123.76h0.6M1023.8 124.90h0.6M1026.7 126.04h0.6M1028.2 127.18h0.6M1031.1 127.18h0.6M1041.2 127.18h4.9M1022.3 130.60h1.3M1021.6 131.74h0.6M1026.0 131.74h0.6M1043.4 131.74h7.1M1050.7 131.74h0.6M1058.0 131.74h2.8M1022.3 132.88h0.6M1028.9 132.88h5.7M1020.9 134.02h0.6M1032.5 134.02h0.6M1033.2 134.02h3.5M1045.6 134.02h0.6M1065.2 134.02h4.9M1070.3 134.02h0.6M1019.4 135.16h2.0M1021.6 135.16h0.6M1024.5 135.16h0.6M1036.2 135.16h0.6M1016.5 136.30h6.4M1023.1 136.30h0.6M1016.5 137.44h1.3M1013.6 138.58h1.3M1013.6 139.72h1.3M1010.7 140.86h1.3M1013.6 142.00h0.6M1020.9 142.00h0.6M1022.3 142.00h0.6M1023.8 142.00h0.6M1046.3 143.14h0.6M1015.8 144.28h0.6M1022.3 144.28h4.9M1027.4 144.28h0.6M1031.1 144.28h0.6M1031.8 144.28h3.5M1035.4 144.28h0.6M1015.1 145.42h0.6M1010.7 146.56h1.3M1013.6 147.70h0.6M1020.9 147.70h0.6M1022.3 147.70h0.6M1023.8 147.70h0.6M1015.1 148.84h0.6M1017.3 148.84h0.6M1010.7 149.98h1.3M1013.6 151.12h0.6M1020.9 151.12h0.6M1022.3 151.12h0.6M1023.8 151.12h0.6M1016.5 152.26h0.6M1018.0 152.26h4.2M1013.6 154.54h7.1M1015.8 155.68h1.3M1013.6 156.82h2.0M1010.7 157.96h1.3M1018.0 159.10h0.6M1025.2 159.10h0.6M1026.7 159.10h0.6M1028.2 159.10h0.6M1018.0 160.24h0.6M1022.3 160.24h0.6M1025.2 160.24h0.6M1027.4 160.24h0.6M1032.5 160.24h0.6M1036.9 160.24h0.6M1015.8 161.38h0.6M1025.2 161.38h1.3M1028.9 161.38h0.6M1039.8 161.38h0.6M1047.1 161.38h0.6M1048.5 161.38h1.3M1058.0 161.38h1.3M1061.6 161.38h0.6M1013.6 162.52h0.6M1015.1 162.52h0.6M1018.7 162.52h0.6M1026.7 162.52h0.6M1028.2 162.52h0.6M1020.2 163.66h0.6M1018.0 164.80h0.6M1020.2 164.80h0.6M1023.8 164.80h0.6M1031.1 164.80h0.6M1033.2 164.80h0.6M1041.2 164.80h0.6M1067.4 164.80h0.6M1069.6 164.80h0.6M1020.9 165.94h0.6M1023.1 165.94h0.6M1029.6 165.94h0.6M1035.4 165.94h0.6M1039.8 165.94h0.6M1042.7 165.94h1.3M1018.7 167.08h1.3M1021.6 167.08h0.6M1027.4 167.08h0.6M1030.3 167.08h0.6M1031.8 167.08h1.3M1034.0 167.08h0.6M1036.2 167.08h0.6M1038.3 167.08h0.6M1043.4 167.08h0.6M1044.9 167.08h0.6M1050.7 167.08h0.6M1053.6 167.08h0.6M1055.8 167.08h0.6M1060.9 167.08h2.0M1066.0 167.08h1.3M1069.6 167.08h1.3M1023.1 168.22h0.6M1027.4 168.22h0.6M1024.5 169.36h0.6M1036.9 169.36h0.6M1026.7 170.50h0.6M1016.5 171.64h1.3M1018.7 171.64h0.6M1035.4 171.64h0.6M1039.1 171.64h0.6M1040.5 171.64h0.6M1042.0 171.64h1.3M1044.9 171.64h0.6M1048.5 171.64h0.6M1055.8 171.64h1.3M1058.7 171.64h0.6M1062.3 171.64h0.6M1068.9 171.64h0.6M1071.0 171.64h0.6M1021.6 172.78h0.6M1023.8 172.78h0.6M1022.3 173.92h0.6M1023.8 173.92h0.6M1025.2 175.06h0.6M1026.7 175.06h0.6M1031.1 176.20h0.6M1033.2 176.20h0.6M1031.1 177.34h0.6M1033.2 177.34h0.6M1039.8 177.34h0.6M1030.3 178.48h0.6M1033.2 178.48h0.6M1044.1 178.48h0.6M1051.4 178.48h0.6M1022.3 179.62h0.6M1019.4 180.76h1.3M1023.8 181.90h0.6M1029.6 181.90h0.6M1024.5 183.04h0.6M1031.8 183.04h0.6M1033.2 183.04h0.6M1034.7 183.04h0.6M1024.5 184.18h0.6M1029.6 184.18h1.3M1032.5 184.18h0.6M1036.2 184.18h0.6M1037.6 184.18h0.6M1029.6 185.32h0.6M1031.8 185.32h0.6M1036.9 185.32h0.6M1038.3 185.32h1.3M1027.4 186.46h0.6M1032.5 186.46h1.3M1035.4 186.46h0.6M1039.1 186.46h0.6M1040.5 186.46h0.6M1028.9 187.60h0.6M1032.5 187.60h0.6M1039.1 187.60h0.6M1046.3 187.60h0.6M1048.5 187.60h0.6M1052.1 187.60h0.6M1055.8 187.60h0.6M1062.3 187.60h0.6M1031.1 188.74h0.6M1036.2 188.74h0.6M1038.3 188.74h0.6M1042.0 188.74h0.6M1050.0 188.74h0.6M1052.9 188.74h0.6M1055.1 188.74h0.6M1060.9 188.74h0.6M1063.1 188.74h0.6M1066.0 188.74h1.3M1068.9 188.74h0.6M1071.0 188.74h0.6M1035.4 189.88h0.6M1039.8 189.88h0.6M1047.1 189.88h0.6M1048.5 189.88h0.6M1050.0 189.88h1.3M1057.2 189.88h1.3M1034.0 191.02h1.3M1035.4 191.02h0.6M1042.7 191.02h0.6M1043.4 191.02h6.4M1058.0 191.02h0.6M1066.7 191.02h0.6M1068.9 191.02h0.6M1069.6 191.02h2.0M1036.2 192.16h0.6M1042.0 192.16h0.6M1060.9 192.16h0.6M1067.4 192.16h1.3M1068.9 192.16h0.6M1041.2 193.30h0.6M1053.6 193.30h0.6M1036.9 194.44h0.6M1042.7 194.44h0.6M1039.8 196.72h0.6M1058.7 196.72h0.6M1062.3 196.72h0.6M1034.7 197.86h0.6M1068.9 197.86h0.6M1070.3 197.86h1.3M1034.0 199.00h7.1M1039.1 201.28h4.9M1046.3 201.28h6.4M1067.4 201.28h0.6M1034.7 202.42h0.6M1050.7 202.42h0.6M1051.4 202.42h1.3M1052.9 202.42h0.6M1055.1 202.42h0.6M1063.1 202.42h0.6M1040.5 203.56h2.8M1044.1 203.56h0.6M1036.2 204.70h0.6M1047.8 205.84h0.6M1069.6 205.84h0.6M1070.3 205.84h1.3M1038.3 208.12h0.6M1037.6 210.40h0.6M1046.3 210.40h0.6M1059.4 210.40h0.6M1061.6 210.40h0.6M1068.1 210.40h0.6M1036.9 211.54h0.6M1040.5 211.54h0.6M1036.2 212.68h0.6M1031.1 214.96h1.3M1032.5 216.10h0.6M1037.6 218.38h0.6M1028.2 219.52h1.3M1034.0 220.66h0.6M1025.2 225.22h1.3M1028.9 226.36h0.6M1029.6 226.36h5.7M1022.3 228.64h1.3M1031.1 229.78h0.6M1026.0 230.92h0.6M1023.1 232.06h0.6M1028.2 232.06h0.6M1019.4 233.20h1.3M1025.2 234.34h0.6M1027.4 234.34h0.6M1030.3 234.34h0.6M1029.6 235.48h0.6M1024.5 236.62h0.6M1023.1 237.76h0.6M1028.2 237.76h0.6M1016.5 238.90h1.3M1013.6 240.04h1.3M1010.7 241.18h1.3M1014.3 242.32h0.6M1021.6 242.32h0.6M1023.1 242.32h0.6M1024.5 242.32h0.6M1014.3 243.46h0.6M1027.4 243.46h0.6M1017.3 246.88h0.6M1013.6 248.02h2.0M1013.6 250.30h4.2M1018.7 250.30h4.2M1023.8 250.30h0.6M1033.2 250.30h0.6M1034.0 250.30h2.0M1036.2 250.30h0.6M1038.3 250.30h0.6M1050.0 250.30h0.6M1016.5 251.44h1.3M1018.0 251.44h0.6M1018.7 251.44h2.8M1016.5 252.58h2.8M1028.9 252.58h0.6M1036.2 252.58h0.6M1037.6 252.58h0.6M1016.5 253.72h6.4M1035.4 253.72h0.6M1019.4 254.86h0.6M1027.4 254.86h0.6M1016.5 256.00h1.3M1018.0 256.00h0.6M1013.6 257.14h1.3M1018.7 258.28h2.8M1021.6 258.28h0.6M1019.4 259.42h0.6M1013.6 260.56h1.3M1010.7 261.70h1.3M1014.3 262.84h0.6M1021.6 262.84h0.6M1023.1 262.84h0.6M1024.5 262.84h0.6M1019.4 265.12h0.6M1029.6 265.12h2.8M1033.2 265.12h0.6M1051.4 265.12h0.6M1059.4 265.12h0.6M1063.8 265.12h0.6M1018.7 266.26h0.6M1023.8 266.26h0.6M1025.2 266.26h2.0M1027.4 266.26h0.6M1013.6 267.40h2.8M1016.5 267.40h0.6M1010.7 268.54h1.3M1013.6 269.68h0.6M1020.9 269.68h0.6M1022.3 269.68h0.6M1023.8 269.68h0.6M1020.2 271.96h0.6M1021.6 271.96h4.9M1044.1 271.96h0.6M1044.9 271.96h2.0M1047.1 271.96h0.6M1053.6 271.96h0.6M1015.8 273.10h0.6M1025.2 273.10h0.6M1039.8 273.10h2.8M1042.7 273.10h0.6M1043.4 273.10h2.0M1013.6 274.24h1.3M1010.7 275.38h1.3M1024.5 276.52h0.6M1025.2 276.52h6.4M1042.0 276.52h0.6M1046.3 276.52h0.6M1047.8 276.52h2.0M1017.3 277.66h0.6M1018.0 277.66h7.1M1027.4 277.66h0.6M1010.7 278.80h1.3M1013.6 279.94h0.6M1020.9 279.94h0.6M1022.3 279.94h0.6M1023.8 279.94h0.6M1015.8 282.22h0.6M1047.8 284.50h0.6M1052.1 284.50h0.6M1055.1 284.50h0.6M1020.9 285.64h0.6M1013.6 286.78h1.3M1013.6 287.92h2.0M1025.2 289.06h0.6M1026.0 289.06h2.8M1034.0 289.06h0.6M1010.7 290.20h1.3M1013.6 291.34h0.6M1020.9 291.34h0.6M1022.3 291.34h0.6M1023.8 291.34h0.6M1033.2 293.62h0.6M1013.6 295.90h1.3M1013.6 297.04h3.5M1017.3 297.04h0.6M1020.9 297.04h0.6M1026.0 297.04h0.6M1010.7 298.18h1.3M1013.6 299.32h0.6M1020.9 299.32h0.6M1022.3 299.32h0.6M1023.8 299.32h0.6M1031.8 301.60h0.6M1033.2 301.60h2.8M1015.1 302.74h0.6M1010.7 305.02h1.3M1013.6 307.30h0.6M1020.9 307.30h0.6M1022.3 307.30h0.6M1023.8 307.30h0.6M1015.8 309.58h8.6M1024.5 309.58h0.6M1025.2 309.58h4.2M1029.6 309.58h0.6M1013.6 310.72h5.7M1010.7 313.00h1.3M1013.6 315.28h0.6M1020.9 315.28h0.6M1022.3 315.28h0.6M1023.8 315.28h0.6M1015.1 317.56h0.6M1027.4 317.56h0.6M1019.4 318.70h0.6M1015.8 319.84h0.6M1010.7 320.98h1.3M1013.6 323.26h0.6M1020.9 323.26h0.6M1022.3 323.26h0.6M1023.8 323.26h0.6M1017.3 324.40h0.6M1033.2 324.40h0.6M1020.9 325.54h4.2M1026.0 325.54h0.6M1031.8 325.54h0.6M1035.4 325.54h0.6M1036.2 325.54h0.6M1015.8 327.82h0.6M1018.7 330.10h0.6M1019.4 331.24h0.6M1028.2 331.24h2.0M1030.3 331.24h0.6M1010.7 333.52h1.3M1007.8 334.66h2.0" stroke="#d4d4d4"/><path d="M1027.4 39.40h6.4M1050.0 49.66h4.2M1013.6 62.20h4.2M1020.2 65.62h4.2M1018.0 67.90h2.8M1031.1 69.04h11.5M1019.4 73.60h7.8M1019.4 74.74h5.7M1026.0 74.74h6.4M1030.3 87.28h4.9M1023.1 96.40h1.3M1025.2 100.96h9.3M1025.2 104.38h5.7M1063.8 104.38h7.8M1023.1 105.52h4.2M1013.6 114.64h4.9M1019.4 121.48h7.8M1019.4 122.62h4.2M1027.4 128.32h4.9M1035.4 131.74h7.1M1061.6 131.74h4.9M1067.4 131.74h4.2M1054.3 132.88h10.0M1050.0 134.02h7.8M1025.2 135.16h8.6M1013.6 143.14h12.9M1027.4 143.14h8.6M1036.9 143.14h2.8M1013.6 153.40h5.7M1016.5 161.38h7.8M1040.5 161.38h6.4M1050.7 161.38h6.4M1042.7 164.80h0.6M1043.4 164.80h22.4M1066.0 164.80h0.6M1041.2 165.94h1.3M1028.2 167.08h2.0M1063.8 167.08h1.3M1024.5 168.22h2.8M1026.0 169.36h10.8M1028.2 170.50h4.9M1022.3 171.64h7.8M1044.9 178.48h6.4M1025.2 181.90h4.2M1025.2 184.18h3.5M1028.2 186.46h3.5M1047.1 196.72h7.8M1066.7 196.72h4.9M1035.4 197.86h12.9M1049.2 197.86h15.8M1055.1 201.28h11.5M1042.7 202.42h7.8M1049.2 205.84h10.8M1036.2 206.98h4.9M1042.0 206.98h6.4M1047.1 210.40h10.8M1031.1 217.24h6.4M1028.2 222.94h11.5M1022.3 229.78h8.6M1035.4 229.78h4.2M1026.7 230.92h4.2M1018.0 244.60h4.2M1022.3 251.44h5.7M1036.9 253.72h5.7M1020.9 254.86h6.4M1028.2 254.86h2.8M1018.7 256.00h2.0M1034.7 265.12h11.5M1047.1 265.12h4.2M1013.6 266.26h4.9M1042.0 271.96h2.0M1059.4 271.96h3.5M1026.7 273.10h10.0M1048.5 273.10h2.8M1032.5 276.52h9.3M1028.2 277.66h7.1M1016.5 283.36h7.1M1030.3 284.50h10.0M1013.6 293.62h11.5M1034.0 293.62h2.8M1015.8 294.76h4.9M1013.6 301.60h15.8M1013.6 303.88h2.8M1013.6 311.86h2.8M1015.8 317.56h10.8M1034.7 324.40h0.6M1013.6 326.68h8.6M1016.5 328.96h4.2" stroke="#ce9178"/><path d="M1007.8 40.54h2.0M1015.1 40.54h4.9M1028.9 40.54h3.5M1013.6 51.94h1.3M1013.6 56.50h1.3M1013.6 58.78h2.0M1017.3 64.48h5.7M1013.6 65.62h2.0M1013.6 66.76h1.3M1016.5 69.04h2.0M1019.4 71.32h1.3M1013.6 82.72h2.0M1018.0 87.28h5.7M1028.2 87.28h1.3M1013.6 91.84h2.0M1022.3 97.54h2.0M1022.3 98.68h1.3M1019.4 112.36h5.7M1016.5 121.48h2.0M1024.5 122.62h3.5M1026.7 124.90h2.0M1022.3 129.46h1.3M1019.4 134.02h1.3M1015.1 142.00h5.7M1013.6 144.28h2.0M1013.6 145.42h1.3M1015.1 147.70h5.7M1015.1 151.12h5.7M1019.4 159.10h5.7M1013.6 160.24h2.0M1019.4 160.24h2.8M1016.5 163.66h2.0M1016.5 165.94h2.0M1039.1 165.94h0.6M1026.0 183.04h5.7M1025.2 185.32h2.0M1031.8 188.74h2.0M1031.1 189.88h2.0M1050.7 191.02h6.4M1034.0 193.30h1.3M1055.1 193.30h4.9M1034.0 201.28h1.3M1063.8 202.42h7.8M1034.0 204.70h2.0M1034.0 206.98h1.3M1036.9 212.68h1.3M1028.2 220.66h2.0M1025.2 226.36h1.3M1019.4 237.76h1.3M1024.5 237.76h2.8M1015.8 242.32h5.7M1028.9 251.44h6.4M1016.5 254.86h2.0M1031.8 258.28h6.4M1013.6 259.42h2.0M1015.8 262.84h5.7M1064.5 265.12h0.6M1015.1 269.68h5.7M1023.8 273.10h0.6M1037.6 273.10h1.3M1018.0 276.52h6.4M1015.1 279.94h5.7M1013.6 282.22h2.0M1015.1 291.34h5.7M1013.6 294.76h1.3M1024.5 297.04h0.6M1015.1 299.32h5.7M1015.1 307.30h5.7M1015.1 315.28h5.7M1013.6 317.56h1.3M1015.1 323.26h5.7M1016.5 331.24h2.0" stroke="#569cd6"/><path d="M1017.3 42.82h4.2M1015.8 49.66h8.6M1025.2 49.66h4.9M1040.5 49.66h2.0M1066.0 49.66h2.0M1013.6 54.22h0.6M1013.6 55.36h1.3M1015.8 55.36h0.6M1015.8 56.50h3.5M1018.7 62.20h1.3M1010.7 64.48h4.9M1030.3 64.48h3.5M1034.7 64.48h3.5M1055.8 64.48h3.5M1021.6 70.18h8.6M1022.3 72.46h5.7M1010.7 87.28h5.7M1016.5 88.42h4.2M1016.5 91.84h1.3M1020.2 94.12h0.6M1025.2 97.54h8.6M1033.2 102.10h2.8M1028.2 105.52h3.5M1032.5 105.52h7.1M1018.0 106.66h2.0M1010.7 112.36h7.1M1024.5 124.90h1.3M1027.4 126.04h2.0M1030.3 126.04h0.6M1034.7 127.18h5.7M1051.4 131.74h5.7M1023.8 132.88h4.2M1036.9 132.88h4.9M1037.6 134.02h5.7M1058.7 134.02h5.7M1022.3 135.16h2.0M1010.7 142.00h2.8M1016.5 144.28h4.9M1010.7 147.70h2.8M1018.0 148.84h4.2M1010.7 151.12h2.8M1013.6 152.26h2.0M1010.7 159.10h7.1M1029.6 161.38h10.0M1062.3 161.38h9.3M1030.3 165.94h4.9M1022.3 167.08h4.9M1039.1 167.08h4.2M1020.9 171.64h0.6M1034.0 171.64h0.6M1036.2 171.64h2.8M1034.0 178.48h10.0M1019.4 183.04h4.9M1040.5 189.88h6.4M1036.2 191.02h6.4M1042.7 192.16h8.6M1052.1 192.16h8.6M1060.9 193.30h6.4M1068.1 193.30h2.8M1034.0 196.72h5.7M1053.6 202.42h1.3M1042.0 210.40h4.2M1058.7 210.40h0.6M1060.1 210.40h1.3M1062.3 210.40h5.7M1068.9 210.40h2.8M1038.3 211.54h1.3M1031.1 218.38h6.4M1038.3 218.38h1.3M1031.1 220.66h2.8M1027.4 226.36h1.3M1031.8 229.78h2.8M1022.3 230.92h3.5M1026.0 234.34h0.6M1025.2 235.48h3.5M1031.1 235.48h4.2M1010.7 242.32h3.5M1015.1 243.46h3.5M1016.5 244.60h0.6M1013.6 246.88h3.5M1029.6 258.28h1.3M1039.1 258.28h2.0M1016.5 259.42h2.8M1010.7 262.84h3.5M1013.6 265.12h5.7M1060.1 265.12h3.5M1010.7 269.68h2.8M1015.8 277.66h1.3M1010.7 279.94h2.8M1020.9 284.50h8.6M1041.2 284.50h6.4M1010.7 291.34h2.8M1018.0 297.04h2.8M1021.6 297.04h2.0M1010.7 299.32h2.8M1030.3 301.60h0.6M1010.7 307.30h2.8M1010.7 315.28h2.8M1010.7 323.26h2.8M1013.6 325.54h6.4M1032.5 325.54h2.8M1020.9 331.24h6.4M1031.1 331.24h4.9" stroke="#dcdcaa"/><path d="M1015.8 51.94h3.5M1070.3 132.88h1.3M1046.3 134.02h2.8M1034.7 135.16h1.3M1016.5 167.08h1.3M1052.1 167.08h1.3M1037.6 185.32h0.6M1062.3 188.74h0.6M1068.1 188.74h0.6M1017.3 267.40h0.6M1032.5 271.96h8.6" stroke="#b5cea8"/><path d="M1036.2 165.94h2.8M1020.2 171.64h0.6M1021.6 171.64h0.6M1030.3 171.64h1.3M1034.7 171.64h0.6" stroke="#d16969"/><path d="M1031.8 171.64h2.0" stroke="#d7ba7d"/></svg>
<div id="red"></div>

<div id="wx">
  <svg viewBox="0 0 48 42" style="position:absolute;left:0;top:0;width:48px;height:42px">
    <path d="M17.5 3C9 3 2.5 8.6 2.5 15.6c0 4 2.2 7.5 5.6 9.8l-1.5 4.6 5.2-2.8c1.8.5 3.6.9 5.7.9.5 0 1 0 1.5-.1-.3-1.100-.5-2.200-.5-3.400 0-6.500 6.100-11.700 13.700-11.700.5 0 1 0 1.500.1C32.400 7.200 25.600 3 17.500 3z" fill="#dcdcdc"/>
    <circle cx="12.3" cy="11.6" r="2" fill="#1e1e1e"/><circle cx="22.6" cy="11.600" r="2" fill="#1e1e1e"/>
    <path d="M45.500 24.800c0-5.900-5.800-10.700-12.600-10.700-7.200 0-12.800 4.800-12.800 10.700s5.600 10.700 12.800 10.700c1.500 0 3-.4 4.500-.8l4.100 2.300-1.100-3.800c3-2.300 5.100-5.200 5.100-8.400z" fill="#dcdcdc"/>
    <circle cx="28.800" cy="22.400" r="1.700" fill="#1e1e1e"/><circle cx="37.200" cy="22.400" r="1.700" fill="#1e1e1e"/>
  </svg>
  <div class="t">潇湘信安</div>
</div>
</body>
</html>
